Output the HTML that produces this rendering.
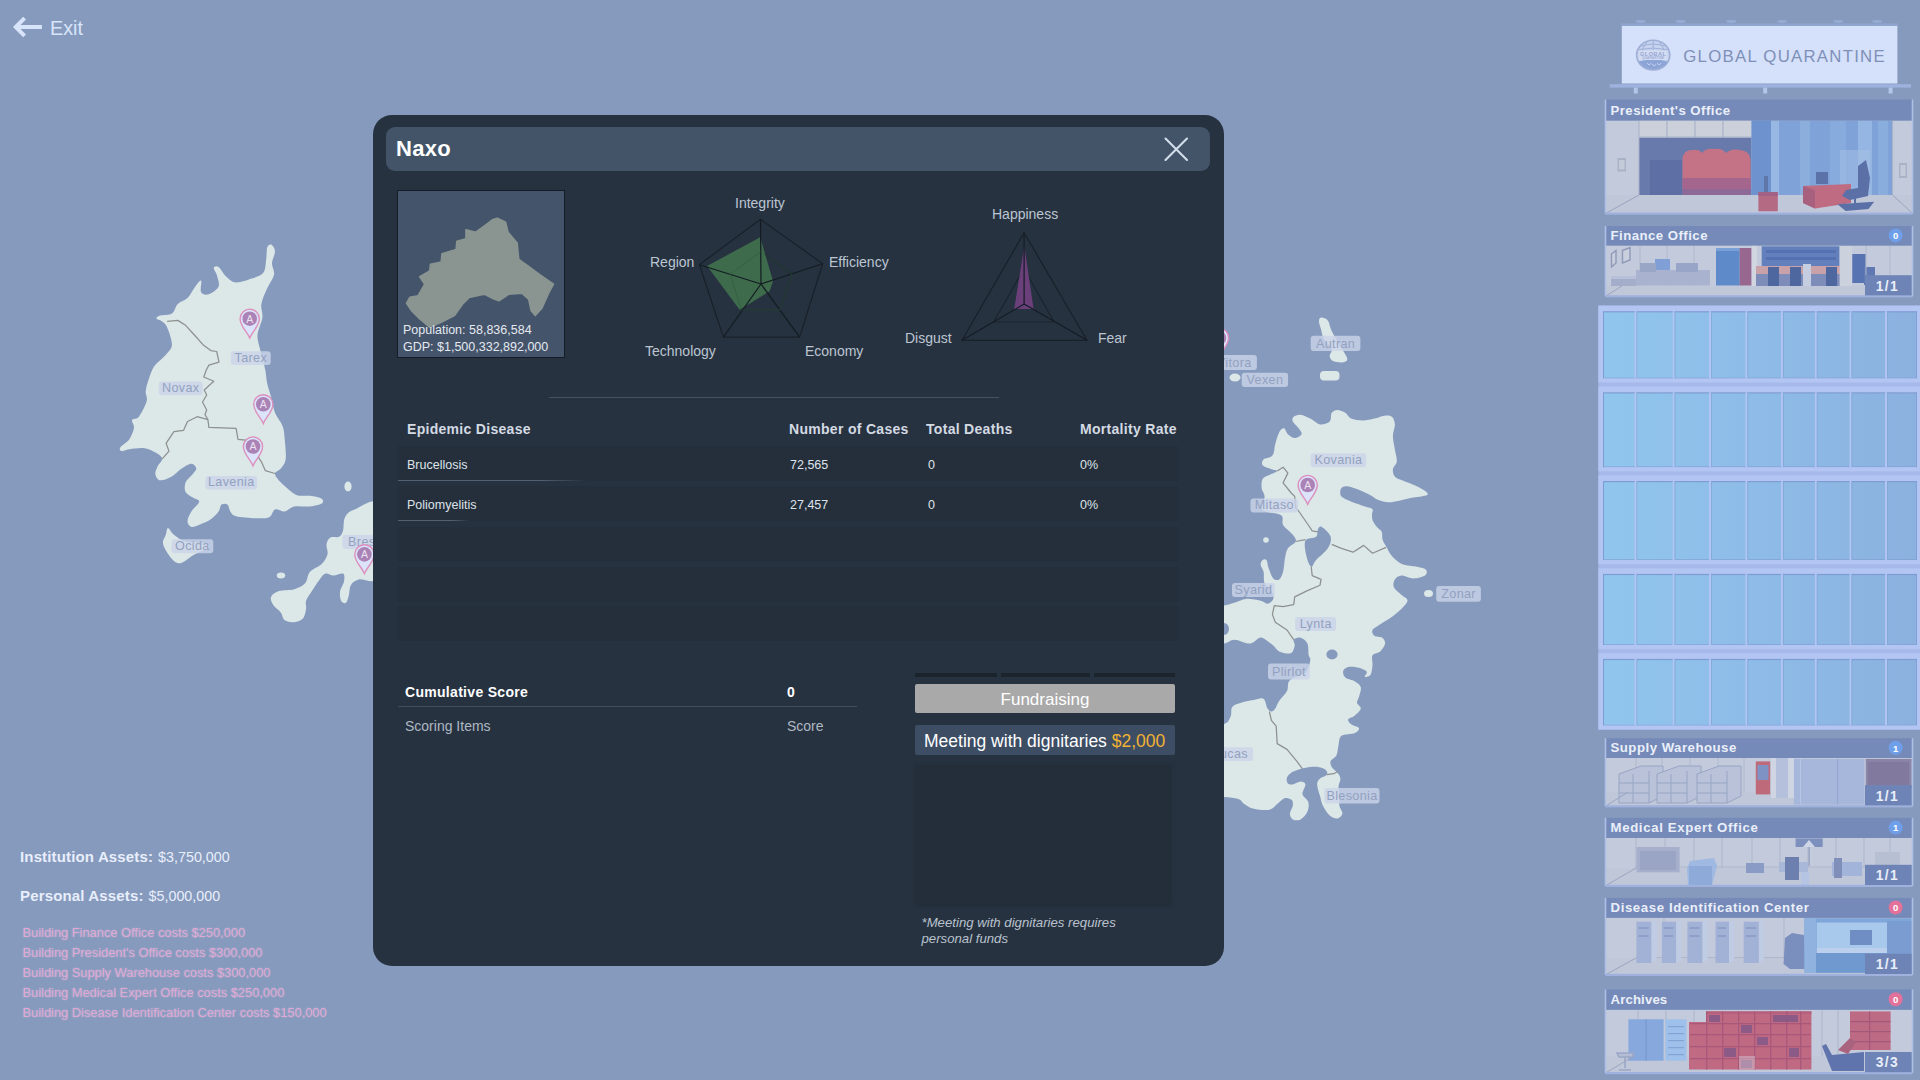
<!DOCTYPE html>
<html lang="en">
<head>
<meta charset="utf-8">
<title>Global Quarantine - Naxo</title>
<style>
*{box-sizing:border-box;margin:0;padding:0}
html,body{width:1920px;height:1080px;overflow:hidden}
body{background:#869abd;font-family:"Liberation Sans",sans-serif;position:relative;color:#fff}
.abs{position:absolute}
#map{position:absolute;left:0;top:0;width:1920px;height:1080px}
/* exit */
#exit{position:absolute;left:50px;top:15.5px;font-size:19.8px;color:#d7e4fa;line-height:24px}
/* assets */
.asset{position:absolute;left:20px;font-size:14.3px;color:#e8eefb;white-space:nowrap;line-height:18px}
.asset b{letter-spacing:.15px;font-weight:bold;font-size:15px;margin-right:1px}
.cost{position:absolute;left:22.5px;font-size:12.85px;color:#dea9d3;text-shadow:0 0 2px rgba(230,200,235,.55);white-space:nowrap;line-height:16px}
/* modal */
#modal{position:absolute;left:373px;top:115px;width:850.5px;height:850.5px;background:#273240;border-radius:19px}
#mhead{position:absolute;left:13px;top:12px;width:824px;height:44px;background:#435468;border-radius:9px}
#mtitle{position:absolute;left:10px;top:9px;font-size:22px;font-weight:bold;color:#fff;line-height:26px;letter-spacing:.3px}
#cbox{position:absolute;left:24px;top:75px;width:168px;height:168px;background:#44546a;border:1.5px solid #151c26}
#cbox .t{position:absolute;left:5px;font-size:12.5px;color:#e4e9f0;line-height:15px;white-space:nowrap}
.rl{position:absolute;font-size:14px;color:#bcc6d2;white-space:nowrap;line-height:16px}
#divider{position:absolute;left:176px;top:282px;width:450px;height:1px;background:#465363}
.th{position:absolute;top:306px;font-size:14px;font-weight:bold;color:#d3dae3;letter-spacing:.3px;white-space:nowrap;line-height:16px}
.row{position:absolute;left:25px;width:780px;height:35px;background:#252f3b}
.row span{position:absolute;top:11.5px;font-size:12.5px;color:#dde3ea;line-height:15px;white-space:nowrap}
.row i{position:absolute;left:0;bottom:0;height:1px;background:linear-gradient(90deg,#53606f 0,#53606f 75%,rgba(83,96,111,0))}
.tab{position:absolute;top:558px;height:4px;background:#1b232d}
#fund{position:absolute;left:542px;top:569px;width:260px;height:29px;background:#a9a9a9;border-radius:2px;color:#fff;font-size:17px;text-align:center;line-height:32px}
#meet{position:absolute;left:542px;top:610px;width:260px;height:30px;background:#3d4d63;border-radius:2px;color:#fff;font-size:17.5px;line-height:32px;padding-left:9px;white-space:nowrap}
#meet em{font-style:normal;color:#f2b233}
#dbox{position:absolute;left:542px;top:650px;width:257px;height:141px;background:#242d3a;box-shadow:0 0 3px #242d3a}
#note{position:absolute;left:548.5px;top:800px;font-size:13.2px;font-style:italic;color:#b9c2ce;line-height:16px;white-space:nowrap}
.sc{position:absolute;white-space:nowrap;line-height:16px}
</style>
</head>
<body>
<!--MAPSTART--><svg id="map" width="1920" height="1080" viewBox="0 0 1920 1080">
<g fill="#dce7e8">
<path d="M271.1 244.6 C272.4 245.2 274.9 248.3 275.0 251.4 C275.1 254.5 272.2 259.1 272.0 263.0 C271.8 266.9 274.8 270.5 274.0 274.7 C273.2 278.9 269.3 283.4 267.2 288.3 C265.1 293.2 262.2 299.0 261.4 303.9 C260.6 308.8 263.0 312.3 262.4 317.5 C261.8 322.7 257.8 329.5 257.5 335.0 C257.2 340.5 259.1 344.8 260.4 350.6 C261.7 356.4 264.2 364.5 265.3 370.0 C266.4 375.5 266.2 379.1 267.2 383.6 C268.2 388.1 269.8 392.3 271.1 397.2 C272.4 402.1 273.1 407.9 275.0 412.8 C276.9 417.7 281.2 422.0 282.8 426.4 C284.4 430.8 284.2 434.0 284.7 439.4 C285.2 444.8 286.3 454.0 285.7 458.9 C285.1 463.8 282.6 466.0 280.8 468.6 C279.0 471.2 274.4 471.5 275.0 474.4 C275.6 477.3 281.1 482.7 284.7 486.1 C288.3 489.5 292.2 493.3 296.4 494.9 C300.6 496.5 305.8 495.2 310.0 495.8 C314.2 496.4 319.8 497.4 321.7 498.7 C323.6 500.0 323.6 502.3 321.7 503.6 C319.8 504.9 314.6 506.0 310.0 506.5 C305.4 507.0 298.6 505.7 294.4 506.5 C290.2 507.3 287.9 510.9 284.7 511.4 C281.5 511.9 277.6 508.4 275.0 509.4 C272.4 510.4 272.4 515.7 269.2 517.2 C266.0 518.7 261.1 518.4 255.6 518.2 C250.1 518.0 240.3 517.3 236.1 516.2 C231.9 515.1 231.8 513.3 230.3 511.4 C228.9 509.5 228.9 505.7 227.4 504.6 C225.9 503.5 223.0 503.5 221.5 504.6 C220.0 505.7 220.4 509.0 218.6 511.4 C216.8 513.8 213.7 517.1 210.8 519.2 C207.9 521.3 204.3 522.7 201.1 524.0 C197.9 525.3 193.7 527.4 191.4 526.9 C189.1 526.4 187.5 523.7 187.5 521.1 C187.5 518.5 189.5 514.6 191.4 511.4 C193.3 508.2 198.9 504.0 199.2 501.7 C199.5 499.4 195.6 499.4 193.3 497.8 C191.0 496.2 186.9 494.5 185.6 491.9 C184.3 489.3 184.5 485.1 185.6 482.2 C186.7 479.3 190.6 476.7 192.4 474.4 C194.2 472.1 196.5 470.4 196.3 468.6 C196.1 466.8 193.8 463.8 191.4 463.8 C189.0 463.8 184.9 466.5 181.7 468.6 C178.4 470.7 175.5 474.4 171.9 476.4 C168.3 478.3 163.1 480.6 160.3 480.3 C157.6 480.0 155.9 476.7 155.4 474.4 C154.9 472.1 156.3 469.3 157.4 466.7 C158.5 464.1 162.4 461.2 162.2 458.9 C162.0 456.6 159.3 454.9 156.4 453.1 C153.5 451.3 149.2 448.9 144.7 448.2 C140.2 447.5 133.1 448.7 129.2 449.2 C125.3 449.7 122.9 451.4 121.4 451.1 C119.9 450.8 119.1 449.1 120.4 447.2 C121.7 445.2 126.9 442.6 129.2 439.4 C131.5 436.2 133.5 431.0 134.0 427.8 C134.5 424.6 131.3 421.9 132.1 420.0 C132.9 418.1 136.5 419.8 138.9 416.7 C141.3 413.6 145.6 405.3 146.7 401.1 C147.8 396.9 145.4 395.0 145.7 391.4 C146.0 387.8 147.1 383.9 148.6 379.7 C150.1 375.5 151.5 370.3 154.4 366.1 C157.3 361.9 163.2 358.0 166.1 354.4 C169.0 350.8 171.7 349.2 171.9 344.7 C172.1 340.2 168.7 331.1 167.1 327.2 C165.5 323.3 164.0 322.8 162.2 321.4 C160.4 319.9 156.7 319.5 156.4 318.5 C156.1 317.5 157.7 316.4 160.3 315.6 C162.9 314.8 169.0 315.6 171.9 313.6 C174.8 311.7 175.2 306.5 177.8 303.9 C180.4 301.3 184.6 301.0 187.5 298.1 C190.4 295.2 193.0 289.3 195.3 286.4 C197.6 283.5 200.1 279.6 201.1 280.6 C202.1 281.6 199.8 289.9 201.1 292.2 C202.4 294.5 206.0 295.2 208.9 294.2 C211.8 293.2 217.3 289.6 218.6 286.4 C219.9 283.1 217.5 277.8 216.7 274.7 C215.9 271.6 213.4 269.2 213.7 267.9 C214.0 266.6 216.5 265.4 218.6 266.9 C220.7 268.4 223.5 274.1 226.4 276.7 C229.3 279.3 231.9 282.2 236.1 282.5 C240.3 282.8 247.2 280.2 251.7 278.6 C256.2 277.0 260.9 276.0 263.3 272.8 C265.7 269.6 265.6 263.4 266.2 259.2 C266.8 255.0 266.4 249.9 267.2 247.5 C268.0 245.1 269.8 243.9 271.1 244.6Z"/>
<path d="M168.0 527.9 C169.3 527.9 171.0 532.4 173.9 534.7 C176.8 537.0 180.6 540.0 185.6 541.5 C190.6 543.0 200.1 542.4 204.0 543.4 C207.9 544.4 210.7 545.6 209.0 547.5 C207.3 549.4 198.7 552.2 194.0 554.8 C189.3 557.4 184.6 562.2 181.0 563.0 C177.4 563.8 175.5 562.6 172.5 559.5 C169.5 556.4 164.3 548.5 163.2 544.4 C162.1 540.3 165.0 537.5 165.8 534.7 C166.6 532.0 166.7 527.9 168.0 527.9Z"/>
<path d="M380.0 505.5 C375.8 494.6 360.5 507.4 354.7 509.4 C348.9 511.3 346.9 513.6 345.0 517.2 C343.1 520.8 344.0 527.5 343.0 530.8 C342.0 534.0 341.3 535.6 339.2 536.7 C337.1 537.8 332.5 536.3 330.4 537.6 C328.3 538.9 327.0 541.6 326.5 544.4 C326.0 547.2 328.3 551.0 327.5 554.2 C326.7 557.5 324.6 561.0 321.7 563.9 C318.8 566.8 312.8 568.5 310.0 571.7 C307.2 574.9 307.7 580.4 305.1 583.3 C302.5 586.2 298.8 587.9 294.4 589.2 C290.0 590.5 282.8 589.8 278.9 591.1 C275.0 592.4 272.1 594.6 271.1 596.9 C270.1 599.2 271.5 602.1 273.1 604.7 C274.7 607.3 278.9 609.9 280.8 612.5 C282.7 615.1 282.4 618.7 284.7 620.3 C287.0 621.9 291.3 622.5 294.4 622.2 C297.5 621.9 301.2 620.6 303.2 618.3 C305.1 616.0 305.6 611.5 306.1 608.6 C306.6 605.7 305.1 603.7 306.1 600.8 C307.1 597.9 309.6 594.7 311.9 591.1 C314.2 587.5 317.4 582.3 319.7 579.4 C322.0 576.5 323.3 574.2 325.6 573.6 C327.9 573.0 330.4 575.6 333.3 575.6 C336.2 575.6 341.3 572.6 343.1 573.6 C344.9 574.6 344.5 578.5 344.0 581.4 C343.5 584.3 340.6 587.9 340.1 591.1 C339.6 594.3 340.1 598.8 341.1 600.8 C342.1 602.8 344.7 603.8 346.0 602.8 C347.3 601.8 348.1 597.9 348.9 595.0 C349.7 592.1 349.2 587.9 350.8 585.3 C352.4 582.7 353.7 581.1 358.6 579.4 C363.5 577.7 376.4 587.3 380.0 575.0 C383.6 562.7 384.2 516.4 380.0 505.5Z"/>
<path d="M1321.0 317.5 C1322.5 317.3 1326.0 318.1 1327.8 320.4 C1329.6 322.7 1329.8 327.1 1331.7 331.1 C1333.6 335.2 1336.8 340.2 1339.4 344.7 C1342.0 349.2 1346.6 355.4 1347.2 358.3 C1347.8 361.2 1345.6 361.7 1343.3 362.2 C1341.0 362.7 1335.9 362.2 1333.6 361.2 C1331.3 360.2 1330.0 358.5 1329.7 356.4 C1329.4 354.3 1332.7 351.5 1331.7 348.6 C1330.7 345.7 1325.7 342.1 1323.9 338.9 C1322.1 335.7 1321.8 332.1 1321.0 329.2 C1320.2 326.3 1319.0 323.3 1319.0 321.4 C1319.0 319.4 1319.5 317.7 1321.0 317.5Z"/>
<path d="M1293.7 416.7 C1295.0 415.6 1297.8 414.4 1300.6 414.7 C1303.4 415.0 1307.1 417.0 1310.3 418.6 C1313.5 420.2 1316.8 423.9 1320.0 424.4 C1323.2 424.9 1327.8 423.4 1329.7 421.5 C1331.7 419.6 1330.4 414.7 1331.7 412.8 C1333.0 410.9 1335.2 409.9 1337.5 409.9 C1339.8 409.9 1343.0 411.4 1345.3 412.8 C1347.6 414.2 1348.2 417.3 1351.1 418.6 C1354.0 419.9 1358.9 420.6 1362.8 420.6 C1366.7 420.6 1370.8 419.4 1374.4 418.6 C1378.0 417.8 1381.3 416.0 1384.2 415.7 C1387.1 415.4 1390.1 415.2 1391.9 416.7 C1393.7 418.1 1394.7 421.2 1394.9 424.4 C1395.1 427.6 1392.9 431.9 1392.9 436.1 C1392.9 440.3 1394.2 445.5 1394.9 449.7 C1395.6 453.9 1397.1 458.1 1396.8 461.4 C1396.5 464.6 1393.2 466.6 1392.9 469.2 C1392.6 471.8 1393.3 474.8 1395.0 476.7 C1396.7 478.6 1399.8 479.3 1403.3 480.8 C1406.8 482.3 1411.9 483.9 1415.8 485.8 C1419.7 487.7 1425.0 490.7 1426.7 492.3 C1428.4 493.9 1428.3 494.6 1425.8 495.5 C1423.3 496.4 1416.1 496.9 1411.7 497.8 C1407.3 498.7 1403.1 500.1 1399.2 500.8 C1395.3 501.6 1391.8 502.4 1388.3 502.3 C1384.8 502.2 1381.3 501.2 1378.3 500.0 C1375.2 498.8 1373.5 496.8 1370.0 495.0 C1366.5 493.2 1361.4 490.6 1357.5 489.2 C1353.6 487.8 1349.4 486.5 1346.7 486.3 C1344.0 486.1 1342.6 487.0 1341.5 488.0 C1340.4 489.0 1340.2 491.0 1340.2 492.5 C1340.2 494.0 1340.3 495.4 1341.8 496.8 C1343.3 498.2 1345.9 499.4 1349.2 500.8 C1352.5 502.2 1358.2 504.2 1361.7 505.4 C1365.2 506.6 1368.2 507.1 1370.0 507.8 C1371.8 508.5 1372.5 508.9 1372.8 509.8 C1373.1 510.8 1372.1 511.8 1372.1 513.5 C1372.0 515.2 1371.7 517.8 1372.5 520.0 C1373.3 522.2 1375.2 524.8 1376.7 526.7 C1378.2 528.7 1380.7 529.6 1381.7 531.7 C1382.7 533.8 1381.8 536.9 1382.5 539.2 C1383.2 541.6 1384.2 543.0 1385.8 545.8 C1387.4 548.6 1389.2 553.1 1391.9 556.1 C1394.6 559.1 1397.5 562.1 1401.7 563.9 C1405.9 565.7 1413.2 565.8 1417.2 566.8 C1421.2 567.8 1424.7 568.2 1426.0 569.7 C1427.3 571.2 1427.1 574.1 1425.0 575.6 C1422.9 577.1 1417.2 578.5 1413.3 578.5 C1409.4 578.5 1404.8 575.5 1401.7 575.6 C1398.6 575.8 1396.2 577.5 1394.9 579.4 C1393.6 581.3 1392.8 584.6 1393.9 587.2 C1395.0 589.8 1399.4 592.7 1401.7 595.0 C1404.0 597.3 1407.8 598.2 1407.5 600.8 C1407.2 603.4 1402.6 607.7 1399.7 610.6 C1396.8 613.5 1393.2 616.0 1390.0 618.3 C1386.8 620.6 1383.2 622.2 1380.3 624.2 C1377.4 626.2 1373.5 628.1 1372.5 630.0 C1371.5 631.9 1372.8 634.5 1374.4 635.8 C1376.0 637.1 1380.4 636.5 1382.2 637.8 C1384.0 639.1 1385.4 641.3 1385.1 643.6 C1384.8 645.9 1382.4 649.5 1380.3 651.4 C1378.2 653.3 1373.8 653.0 1372.5 655.3 C1371.2 657.6 1372.8 661.8 1372.5 665.0 C1372.2 668.2 1371.9 672.8 1370.6 674.7 C1369.3 676.7 1365.3 677.2 1364.7 676.7 C1364.1 676.2 1367.7 673.2 1366.7 671.7 C1365.7 670.2 1361.8 668.6 1358.9 667.8 C1356.0 667.0 1351.8 666.3 1349.2 666.8 C1346.6 667.3 1344.0 668.9 1343.3 670.7 C1342.6 672.5 1343.3 675.7 1345.3 677.5 C1347.2 679.3 1352.4 679.8 1355.0 681.4 C1357.6 683.0 1360.1 684.6 1360.8 687.2 C1361.5 689.8 1359.5 694.4 1358.9 697.0 C1358.3 699.6 1356.7 700.9 1357.0 702.8 C1357.3 704.7 1361.1 706.5 1360.8 708.6 C1360.5 710.7 1357.1 713.6 1355.0 715.4 C1352.9 717.2 1348.9 717.8 1348.2 719.3 C1347.5 720.8 1349.3 722.8 1351.1 724.2 C1352.9 725.7 1358.2 726.5 1358.9 728.0 C1359.6 729.5 1357.9 731.6 1355.0 732.9 C1352.1 734.2 1344.2 733.7 1341.4 735.8 C1338.7 737.9 1339.3 742.4 1338.5 745.6 C1337.7 748.9 1337.8 752.7 1336.5 755.3 C1335.2 757.9 1331.5 759.2 1330.7 761.1 C1329.9 763.0 1330.6 765.0 1331.7 766.9 C1332.8 768.8 1336.0 770.8 1337.5 772.8 C1339.0 774.8 1340.2 776.3 1340.4 778.6 C1340.6 780.9 1338.7 783.5 1338.5 786.4 C1338.3 789.3 1339.2 792.9 1339.4 796.1 C1339.6 799.3 1338.9 802.9 1339.4 805.8 C1339.9 808.7 1342.7 811.5 1342.4 813.6 C1342.1 815.7 1339.6 818.2 1337.5 818.5 C1335.4 818.8 1332.1 817.7 1329.7 815.6 C1327.3 813.5 1324.5 809.0 1322.9 805.8 C1321.3 802.5 1321.0 799.7 1320.0 796.1 C1319.0 792.5 1317.1 787.3 1317.1 784.4 C1317.1 781.5 1318.4 780.2 1320.0 778.6 C1321.6 777.0 1325.8 776.2 1326.8 774.7 C1327.8 773.2 1327.2 771.2 1325.8 769.9 C1324.3 768.6 1321.7 767.2 1318.1 766.9 C1314.5 766.6 1308.6 767.1 1304.4 767.9 C1300.2 768.7 1295.7 770.2 1292.8 771.8 C1289.9 773.4 1287.8 775.6 1287.0 777.6 C1286.2 779.6 1286.9 782.4 1287.9 783.5 C1288.9 784.6 1290.7 784.7 1292.8 784.4 C1294.9 784.1 1298.5 781.5 1300.6 781.5 C1302.7 781.5 1305.1 782.3 1305.4 784.4 C1305.7 786.5 1302.0 791.3 1302.5 794.2 C1303.0 797.1 1307.5 799.0 1308.3 801.9 C1309.1 804.8 1308.7 808.8 1307.4 811.7 C1306.1 814.6 1303.0 818.1 1300.6 819.4 C1298.2 820.7 1294.6 820.4 1292.8 819.4 C1291.0 818.4 1289.9 815.9 1289.9 813.6 C1289.9 811.3 1292.5 808.1 1292.8 805.8 C1293.1 803.5 1293.1 801.3 1291.8 800.0 C1290.5 798.7 1287.4 797.5 1285.0 798.1 C1282.6 798.8 1279.8 802.0 1277.2 803.9 C1274.6 805.8 1273.3 808.9 1269.4 809.7 C1265.5 810.5 1258.1 809.8 1253.9 808.8 C1249.7 807.8 1246.8 805.5 1244.2 803.9 C1241.6 802.3 1241.7 800.1 1238.3 799.0 C1234.9 797.9 1230.1 797.4 1223.7 797.1 C1217.3 796.8 1204.0 828.7 1200.0 797.0 C1196.0 765.3 1197.5 638.4 1200.0 606.7 C1202.5 575.0 1211.0 606.9 1215.0 606.7 C1219.0 606.5 1220.5 606.4 1223.7 605.7 C1226.9 605.1 1230.7 603.9 1234.4 602.8 C1238.1 601.7 1241.7 599.2 1246.1 598.9 C1250.5 598.6 1257.1 600.0 1260.7 600.8 C1264.3 601.6 1265.4 604.0 1267.5 603.7 C1269.6 603.4 1272.6 601.0 1273.3 598.9 C1274.0 596.8 1272.9 593.7 1271.4 591.1 C1270.0 588.5 1265.9 586.5 1264.6 583.3 C1263.3 580.1 1264.2 574.8 1263.6 571.7 C1262.9 568.6 1260.9 566.9 1260.7 564.9 C1260.5 562.9 1261.6 560.8 1262.6 560.0 C1263.6 559.2 1265.5 558.7 1266.5 560.0 C1267.5 561.3 1267.4 564.7 1268.5 567.8 C1269.6 570.9 1271.5 576.6 1273.3 578.5 C1275.1 580.4 1277.6 580.5 1279.2 579.4 C1280.8 578.3 1282.1 575.2 1283.1 571.7 C1284.1 568.2 1284.2 562.0 1285.0 558.1 C1285.8 554.2 1286.1 551.1 1287.9 548.3 C1289.7 545.5 1294.9 543.8 1295.7 541.5 C1296.5 539.2 1294.9 537.5 1292.8 534.7 C1290.7 532.0 1285.0 528.2 1283.1 525.0 C1281.1 521.8 1284.5 517.8 1281.1 515.3 C1277.7 512.8 1265.3 513.1 1262.6 510.0 C1259.8 506.9 1264.8 500.0 1264.6 496.4 C1264.4 492.8 1262.0 491.5 1261.7 488.6 C1261.4 485.7 1261.3 481.2 1262.6 478.9 C1263.9 476.6 1267.0 476.3 1269.4 475.0 C1271.8 473.7 1276.9 472.1 1277.2 471.1 C1277.5 470.1 1273.8 470.2 1271.4 469.2 C1269.0 468.2 1263.9 466.9 1262.6 465.3 C1261.3 463.7 1262.0 461.0 1263.6 459.4 C1265.2 457.8 1270.5 458.2 1272.4 455.6 C1274.4 453.0 1274.2 447.8 1275.3 443.9 C1276.4 440.0 1277.8 434.8 1279.2 432.2 C1280.7 429.6 1282.5 428.0 1284.0 428.3 C1285.5 428.6 1286.1 432.6 1287.9 434.2 C1289.7 435.8 1292.4 438.1 1294.7 438.1 C1297.0 438.1 1300.8 435.8 1301.5 434.2 C1302.2 432.6 1300.0 430.4 1298.6 428.3 C1297.1 426.2 1293.6 423.4 1292.8 421.5 C1292.0 419.6 1292.4 417.8 1293.7 416.7Z"/>
<ellipse cx="348" cy="486.5" rx="3.6" ry="5"/>
<ellipse cx="281" cy="575.5" rx="4.2" ry="3"/>
<rect x="1320" y="371" width="19.5" height="9.5" rx="4"/>
<ellipse cx="1235" cy="377.5" rx="5.5" ry="4"/>
<ellipse cx="1428.5" cy="593.5" rx="4.5" ry="3.6"/>
<circle cx="1266" cy="540" r="2.8"/>
</g>
<g fill="#869abd">
<path d="M1200.0 645.6 C1204.0 631.9 1218.0 644.6 1223.7 643.6 C1229.4 642.6 1230.0 639.7 1234.4 639.7 C1238.8 639.7 1245.8 643.9 1250.0 643.6 C1254.2 643.3 1257.1 638.4 1259.7 637.8 C1262.3 637.1 1263.3 638.4 1265.6 639.7 C1267.9 641.0 1271.0 643.7 1273.3 645.6 C1275.6 647.5 1276.3 650.1 1279.2 651.4 C1282.1 652.7 1288.2 654.3 1290.8 653.3 C1293.4 652.3 1294.2 647.9 1294.7 645.6 C1295.2 643.3 1292.7 641.0 1293.7 639.7 C1294.7 638.4 1298.3 637.1 1300.6 637.8 C1302.9 638.4 1306.1 640.7 1307.4 643.6 C1308.8 646.5 1308.2 652.6 1308.7 655.3 C1309.2 658.0 1310.7 657.3 1310.3 660.0 C1309.9 662.7 1308.7 669.0 1306.4 671.7 C1304.1 674.5 1299.6 674.9 1296.7 676.5 C1293.8 678.1 1290.5 679.0 1288.9 681.4 C1287.3 683.8 1288.6 687.9 1287.0 691.1 C1285.4 694.3 1281.2 697.9 1279.2 700.8 C1277.2 703.7 1276.6 706.8 1275.3 708.6 C1274.0 710.4 1272.7 711.5 1271.4 711.5 C1270.1 711.5 1268.8 710.7 1267.5 708.6 C1266.2 706.5 1265.9 700.4 1263.6 698.9 C1261.3 697.4 1257.1 699.4 1253.9 699.9 C1250.7 700.4 1247.8 700.7 1244.2 701.8 C1240.6 702.9 1234.8 704.3 1232.5 706.7 C1230.2 709.1 1232.1 713.5 1230.6 716.4 C1229.1 719.3 1228.8 722.6 1223.7 724.2 C1218.6 725.8 1204.0 739.1 1200.0 726.0 C1196.0 712.9 1196.0 659.3 1200.0 645.6Z"/>
<path d="M1321.9 526.9 C1324.0 528.2 1329.7 533.1 1330.7 536.7 C1331.7 540.3 1330.2 544.4 1327.8 548.3 C1325.4 552.2 1318.9 556.9 1316.1 560.0 C1313.3 563.1 1312.8 567.4 1311.2 566.8 C1309.6 566.1 1307.4 560.5 1306.4 556.1 C1305.4 551.7 1303.8 543.8 1305.4 540.6 C1307.0 537.4 1314.0 538.7 1316.1 536.7 C1318.2 534.8 1317.1 530.5 1318.1 528.9 C1319.1 527.3 1319.8 525.6 1321.9 526.9Z"/>
<ellipse cx="1332" cy="654.5" rx="5.6" ry="5"/>
<ellipse cx="1224" cy="629" rx="5" ry="6"/>
</g>
<g fill="none" stroke="#8d918f" stroke-width="1.25" stroke-linejoin="round">
<path d="M167.1 321.4 L177.8 320.4 L185.6 325.3 L195.3 336.0 L203.0 344.7 L210.8 350.6 L216.7 351.5 L219.0 362.2 L208.9 365.1 L206.3 370.0 L203.8 377.0 L213.8 381.3 L204.2 390.0 L206.7 395.0 L202.5 402.0 L206.7 410.0 L205.0 414.5 L207.9 419.6 L208.9 427.4 L236.1 428.3 L238.0 439.4 L247.8 440.4 L261.4 461.8 L265.3 470.6 L275.0 473.5"/>
<path d="M207.9 419.6 L197.2 416.7 L187.5 421.5 L183.6 430.3 L173.9 431.7 L166.1 443.3 L169.0 451.1 L162.2 458.9"/>
<path d="M1277.2 471.1 L1283.1 467.2 L1287.9 473.1 L1283.1 482.8 L1290.8 492.5 L1294.7 496.4 L1295.7 508.0 L1298.6 511.0 L1308.3 525.0 L1312.2 530.8 L1318.0 531.8"/>
<path d="M1331.7 544.4 L1341.4 548.3 L1353.0 552.2 L1363.7 545.4 L1372.5 553.2 L1386.1 547.4"/>
<path d="M1295.7 541.5 L1305.4 539.6"/>
<path d="M1311.2 566.8 L1312.2 575.6 L1321.0 579.4 L1320.0 585.3 L1306.4 591.1 L1294.7 596.9 L1293.7 604.7 L1283.1 606.7 L1274.3 605.7 L1272.4 614.4 L1275.3 622.2 L1287.0 630.0 L1293.7 639.7"/>
<path d="M1269.4 711.5 L1271.4 720.3 L1276.2 726.1 L1277.2 743.6 L1287.0 749.4 L1296.7 761.1 L1302.5 768.9"/>
<path d="M1326.8 774.7 L1333.6 773.7 L1337.5 771.8"/>
</g>
<rect x="230.8" y="351.2" width="39.9" height="13.9" rx="3" fill="#cad4e8" opacity=".8"/><text x="250.8" y="361.7" font-size="12.6" text-anchor="middle" fill="#93a1c0" letter-spacing=".35" font-family="Liberation Sans, sans-serif">Tarex</text>
<rect x="158.8" y="381.4" width="43.8" height="13.9" rx="3" fill="#cad4e8" opacity=".8"/><text x="180.7" y="391.9" font-size="12.6" text-anchor="middle" fill="#93a1c0" letter-spacing=".35" font-family="Liberation Sans, sans-serif">Novax</text>
<rect x="205.5" y="476.1" width="51.6" height="13.4" rx="3" fill="#cad4e8" opacity=".8"/><text x="231.3" y="486.1" font-size="12.6" text-anchor="middle" fill="#93a1c0" letter-spacing=".35" font-family="Liberation Sans, sans-serif">Lavenia</text>
<rect x="171.5" y="539.3" width="41.8" height="13.9" rx="3" fill="#cad4e8" opacity=".8"/><text x="192.4" y="549.8" font-size="12.6" text-anchor="middle" fill="#93a1c0" letter-spacing=".35" font-family="Liberation Sans, sans-serif">Ocida</text>
<rect x="342.5" y="534.7" width="49.0" height="14.3" rx="3" fill="#cad4e8" opacity=".8"/><text x="367.0" y="545.6" font-size="12.6" text-anchor="middle" fill="#93a1c0" letter-spacing=".35" font-family="Liberation Sans, sans-serif">Bresia</text>
<rect x="1310.7" y="335.7" width="49.7" height="15.3" rx="3" fill="#cad4e8" opacity=".8"/><text x="1335.6" y="347.6" font-size="12.6" text-anchor="middle" fill="#93a1c0" letter-spacing=".35" font-family="Liberation Sans, sans-serif">Autran</text>
<rect x="1241.7" y="372.7" width="46.4" height="14.3" rx="3" fill="#cad4e8" opacity=".8"/><text x="1264.9" y="383.6" font-size="12.6" text-anchor="middle" fill="#93a1c0" letter-spacing=".35" font-family="Liberation Sans, sans-serif">Vexen</text>
<rect x="1211.5" y="355.1" width="45.4" height="14.9" rx="3" fill="#cad4e8" opacity=".8"/><text x="1234.2" y="366.6" font-size="12.6" text-anchor="middle" fill="#93a1c0" letter-spacing=".35" font-family="Liberation Sans, sans-serif">Vitora</text>
<rect x="1310.7" y="453.3" width="55.5" height="13.9" rx="3" fill="#cad4e8" opacity=".8"/><text x="1338.5" y="463.8" font-size="12.6" text-anchor="middle" fill="#93a1c0" letter-spacing=".35" font-family="Liberation Sans, sans-serif">Kovania</text>
<rect x="1250.5" y="498.4" width="47.7" height="14.0" rx="3" fill="#cad4e8" opacity=".8"/><text x="1274.3" y="509.0" font-size="12.6" text-anchor="middle" fill="#93a1c0" letter-spacing=".35" font-family="Liberation Sans, sans-serif">Mitaso</text>
<rect x="1232.0" y="583.0" width="42.8" height="14.0" rx="3" fill="#cad4e8" opacity=".8"/><text x="1253.4" y="593.6" font-size="12.6" text-anchor="middle" fill="#93a1c0" letter-spacing=".35" font-family="Liberation Sans, sans-serif">Syarid</text>
<rect x="1295.2" y="617.1" width="40.9" height="13.9" rx="3" fill="#cad4e8" opacity=".8"/><text x="1315.7" y="627.6" font-size="12.6" text-anchor="middle" fill="#93a1c0" letter-spacing=".35" font-family="Liberation Sans, sans-serif">Lynta</text>
<rect x="1436.2" y="585.9" width="44.7" height="15.9" rx="3" fill="#cad4e8" opacity=".8"/><text x="1458.6" y="598.4" font-size="12.6" text-anchor="middle" fill="#93a1c0" letter-spacing=".35" font-family="Liberation Sans, sans-serif">Zonar</text>
<rect x="1268.0" y="663.6" width="41.8" height="15.8" rx="3" fill="#cad4e8" opacity=".8"/><text x="1288.9" y="676.0" font-size="12.6" text-anchor="middle" fill="#93a1c0" letter-spacing=".35" font-family="Liberation Sans, sans-serif">Plirlot</text>
<rect x="1207.5" y="747.2" width="45.6" height="13.9" rx="3" fill="#cad4e8" opacity=".8"/><text x="1230.3" y="757.7" font-size="12.6" text-anchor="middle" fill="#93a1c0" letter-spacing=".35" font-family="Liberation Sans, sans-serif">Lucas</text>
<rect x="1324.4" y="788.0" width="55.1" height="15.5" rx="3" fill="#cad4e8" opacity=".8"/><text x="1352.0" y="800.1" font-size="12.6" text-anchor="middle" fill="#93a1c0" letter-spacing=".35" font-family="Liberation Sans, sans-serif">Blesonia</text>
<g transform="translate(249.7 337.9)"><path d="M0 0 C-2.5 -6.5 -9.6 -11.5 -9.6 -19.2 A9.6 9.6 0 1 1 9.6 -19.2 C9.6 -11.5 2.5 -6.5 0 0Z" fill="#dbe4fa" stroke="#dd8fbd" stroke-width="1.4"/><circle cx="0" cy="-19.2" r="7.3" fill="#aa82b6"/><text x="0" y="-15.4" font-size="10.5" text-anchor="middle" fill="#ebe2f2" font-family="Liberation Sans, sans-serif">A</text></g>
<g transform="translate(263.3 423.5)"><path d="M0 0 C-2.5 -6.5 -9.6 -11.5 -9.6 -19.2 A9.6 9.6 0 1 1 9.6 -19.2 C9.6 -11.5 2.5 -6.5 0 0Z" fill="#dbe4fa" stroke="#dd8fbd" stroke-width="1.4"/><circle cx="0" cy="-19.2" r="7.3" fill="#aa82b6"/><text x="0" y="-15.4" font-size="10.5" text-anchor="middle" fill="#ebe2f2" font-family="Liberation Sans, sans-serif">A</text></g>
<g transform="translate(253.0 465.7)"><path d="M0 0 C-2.5 -6.5 -9.6 -11.5 -9.6 -19.2 A9.6 9.6 0 1 1 9.6 -19.2 C9.6 -11.5 2.5 -6.5 0 0Z" fill="#dbe4fa" stroke="#dd8fbd" stroke-width="1.4"/><circle cx="0" cy="-19.2" r="7.3" fill="#aa82b6"/><text x="0" y="-15.4" font-size="10.5" text-anchor="middle" fill="#ebe2f2" font-family="Liberation Sans, sans-serif">A</text></g>
<g transform="translate(364.4 573.6)"><path d="M0 0 C-2.5 -6.5 -9.6 -11.5 -9.6 -19.2 A9.6 9.6 0 1 1 9.6 -19.2 C9.6 -11.5 2.5 -6.5 0 0Z" fill="#dbe4fa" stroke="#dd8fbd" stroke-width="1.4"/><circle cx="0" cy="-19.2" r="7.3" fill="#aa82b6"/><text x="0" y="-15.4" font-size="10.5" text-anchor="middle" fill="#ebe2f2" font-family="Liberation Sans, sans-serif">A</text></g>
<g transform="translate(1307.7 504.2)"><path d="M0 0 C-2.5 -6.5 -9.6 -11.5 -9.6 -19.2 A9.6 9.6 0 1 1 9.6 -19.2 C9.6 -11.5 2.5 -6.5 0 0Z" fill="#dbe4fa" stroke="#dd8fbd" stroke-width="1.4"/><circle cx="0" cy="-19.2" r="7.3" fill="#aa82b6"/><text x="0" y="-15.4" font-size="10.5" text-anchor="middle" fill="#ebe2f2" font-family="Liberation Sans, sans-serif">A</text></g>
<g transform="translate(1219.0 357.0)"><path d="M0 0 C-2.5 -6.5 -9.6 -11.5 -9.6 -19.2 A9.6 9.6 0 1 1 9.6 -19.2 C9.6 -11.5 2.5 -6.5 0 0Z" fill="#dbe4fa" stroke="#dd8fbd" stroke-width="1.4"/><circle cx="0" cy="-19.2" r="7.3" fill="#aa82b6"/><text x="0" y="-15.4" font-size="10.5" text-anchor="middle" fill="#ebe2f2" font-family="Liberation Sans, sans-serif">A</text></g>
</svg><!--MAPEND-->
<div id="exit">Exit</div>
<svg class="abs" style="left:10px;top:14px" width="36" height="28" viewBox="0 0 36 28"><path d="M14.6 4.1 L5.7 13 L14.6 21.9 M6.5 13 H31.9" fill="none" stroke="#d7e4fa" stroke-width="3.9" stroke-linecap="butt" stroke-linejoin="miter"/></svg>

<div class="asset" style="top:847.5px"><b>Institution Assets:</b> $3,750,000</div>
<div class="asset" style="top:886.5px"><b>Personal Assets:</b> $5,000,000</div>
<div class="cost" style="top:925px">Building Finance Office costs $250,000</div>
<div class="cost" style="top:945px">Building President's Office costs $300,000</div>
<div class="cost" style="top:965px">Building Supply Warehouse costs $300,000</div>
<div class="cost" style="top:985px">Building Medical Expert Office costs $250,000</div>
<div class="cost" style="top:1005px">Building Disease Identification Center costs $150,000</div>

<!--PANELSTART--><svg class="abs" style="left:0;top:0" width="1920" height="1080" viewBox="0 0 1920 1080" font-family="Liberation Sans, sans-serif">
<ellipse cx="1640.7" cy="21.5" rx="5" ry="1.4" fill="#97acd4"/>
<ellipse cx="1680.6" cy="21.5" rx="5" ry="1.4" fill="#97acd4"/>
<ellipse cx="1731.2" cy="21.5" rx="5" ry="1.4" fill="#97acd4"/>
<ellipse cx="1781.8" cy="21.5" rx="5" ry="1.4" fill="#97acd4"/>
<ellipse cx="1838.2" cy="21.5" rx="5" ry="1.4" fill="#97acd4"/>
<ellipse cx="1877.1" cy="21.5" rx="5" ry="1.4" fill="#97acd4"/>
<rect x="1621.0" y="23.5" width="277.0" height="2.5" fill="#8fa5cf" />
<rect x="1621.8" y="26.0" width="275.6" height="57.5" fill="#d5e0fa" />
<rect x="1609.6" y="84.2" width="301.4" height="3.4" fill="#9db2df" />
<rect x="1633.8" y="87.6" width="4.0" height="5.9" fill="#b4c5ea" />
<rect x="1763.2" y="87.6" width="4.0" height="5.9" fill="#b4c5ea" />
<rect x="1888.6" y="87.6" width="4.0" height="5.9" fill="#b4c5ea" />
<g transform="translate(1653.2 55.1)"><ellipse rx="16.6" ry="14.8" fill="#c6d2ee" stroke="#9fafd6" stroke-width="1.6"/><path d="M-14.6 6.5 Q0 2.5 14.6 6.5 A16.6 14.8 0 0 1 -14.6 6.5Z" fill="#8da5d6"/><g fill="none" stroke="#9fb0d8" stroke-width="1"><path d="M-12 -9 Q0 -13 12 -9 M-14.5 -5.5 Q0 -8.5 14.5 -5.5 M-6 -13.5 Q-10 -8 -11 -4 M6 -13.5 Q10 -8 11 -4 M0 -14.5 V-5"/></g><rect x="-14.2" y="-4.6" width="28.4" height="9.6" rx="1.5" fill="#d3dcf3"/><text x="0" y="0.4" font-size="5.6" font-weight="bold" fill="#93a5d0" text-anchor="middle" letter-spacing=".5">GLOBAL</text><text x="0" y="4.3" font-size="3.2" font-weight="bold" fill="#9badd6" text-anchor="middle" letter-spacing=".1">QUARANTINE</text><path d="M-6 8 l2 2 l2 -2 M-1 9 l2 2 l2 -2 M4 8 l2 2 l2 -2" stroke="#c9d5f0" stroke-width="1" fill="none"/></g>
<text x="1683.3" y="61.8" font-size="16.8" font-weight="normal" fill="#7e90b7" text-anchor="start" letter-spacing="0"  textLength="201.4" lengthAdjust="spacing">GLOBAL QUARANTINE</text>
<rect x="1605.5" y="120.5" width="307.0" height="93.0" fill="#c3cadb" />
<rect x="1639.0" y="137.4" width="112.6" height="57.6" fill="#6879ac" />
<rect x="1639.0" y="120.5" width="112.6" height="16.9" fill="#cbd0db" />
<rect x="1666.4" y="120.5" width="1.2" height="16.9" fill="#aab3c8" />
<rect x="1694.4" y="120.5" width="1.2" height="16.9" fill="#aab3c8" />
<rect x="1722.4" y="120.5" width="1.2" height="16.9" fill="#aab3c8" />
<rect x="1639.0" y="136.6" width="112.6" height="1.2" fill="#a4aec6" />
<path d="M1682.5 189 V158 Q1684 150 1692 150 Q1699 149 1702 153 Q1706 148 1714 149 Q1722 148 1726 153 Q1731 148 1740 150 Q1750 151 1750.6 160 V189Z" fill="#c47286"/>
<rect x="1682.5" y="178.0" width="68.1" height="17.0" fill="#9b6390" opacity=".75"/>
<rect x="1650.0" y="160.0" width="32.0" height="35.0" fill="#56699f" opacity=".6"/>
<rect x="1751.6" y="120.5" width="141.0" height="74.5" fill="#7fa3d8" />
<rect x="1751.6" y="120.5" width="19.4" height="74.5" fill="#6d92cd" />
<rect x="1771.0" y="120.5" width="8.0" height="74.5" fill="#98b8e4" />
<rect x="1800.0" y="120.5" width="10.0" height="74.5" fill="#8eb0df" opacity=".8"/>
<rect x="1830.0" y="120.5" width="16.0" height="74.5" fill="#8badde" opacity=".8"/>
<rect x="1858.0" y="120.5" width="14.0" height="74.5" fill="#9bbae6" opacity=".8"/>
<rect x="1878.0" y="120.5" width="10.0" height="74.5" fill="#8cafdf" opacity=".8"/>
<rect x="1840.0" y="150.0" width="30.0" height="45.0" fill="#a6c0e6" opacity=".55"/>
<rect x="1605.5" y="195.0" width="307.0" height="18.5" fill="#bfc7d9" />
<path d="M1605.5 213.5 L1639 195 M1912.5 213.5 L1892.6 195" stroke="#9aa5c0" stroke-width="1" fill="none"/>
<path d="M1639 120.5 V195 M1892.6 120.5 V195" stroke="#aab3c8" stroke-width="1" fill="none"/>
<rect x="1617.5" y="158.0" width="8.5" height="13.5" fill="#a9b3c6" />
<rect x="1619.0" y="160.0" width="5.5" height="9.5" fill="#c3cad8" />
<rect x="1899.0" y="163.0" width="8.0" height="15.0" fill="#a9b3c6" />
<rect x="1900.5" y="165.0" width="5.0" height="11.0" fill="#c3cad8" />
<rect x="1758.4" y="192.0" width="19.4" height="19.3" fill="#b56a84" />
<rect x="1758.4" y="192.0" width="19.4" height="4.0" fill="#a26286" />
<rect x="1764.0" y="176.0" width="4.0" height="16.0" fill="#5f76a8" />
<path d="M1803 186 L1851 184 L1851 203 L1815 208.5 L1803 203Z" fill="#bf6c82"/>
<path d="M1803 186 L1815 190 L1815 208.5 L1803 203Z" fill="#a8607f"/>
<rect x="1816.0" y="172.0" width="12.0" height="12.0" fill="#5b72a8" />
<path d="M1858 166 L1866 160 L1870 178 L1868 196 L1850 200 L1842 196 L1846 190 L1858 188Z" fill="#5a70a7"/>
<path d="M1840 205 L1872 203 L1868 208 L1846 210Z M1855 198 V207" fill="#5a70a7" stroke="#5a70a7" stroke-width="2"/>
<rect x="1605.5" y="99.5" width="307.0" height="21.0" fill="#758ab8" />
<rect x="1604.7" y="99.5" width="1.6" height="114.0" fill="#aebfe6" />
<rect x="1911.7" y="99.5" width="1.6" height="114.0" fill="#aebfe6" />
<rect x="1605.5" y="212.5" width="307.0" height="2.2" fill="#9fb1dc" />
<text x="1610.5" y="114.9" font-size="13.2" font-weight="bold" fill="#eaeffa" text-anchor="start" letter-spacing="0"  textLength="119.6" lengthAdjust="spacing">President's Office</text>
<rect x="1605.5" y="245.5" width="307.0" height="50.7" fill="#c3cadb" />
<rect x="1639.5" y="245.5" width="1.0" height="40.5" fill="#b0b9cd" />
<rect x="1666.5" y="245.5" width="1.0" height="40.5" fill="#b0b9cd" />
<rect x="1693.5" y="245.5" width="1.0" height="40.5" fill="#b0b9cd" />
<path d="M1611.5 254 L1616 250.5 V263 L1611.5 267Z M1622.5 250.5 L1630 247.5 V260 L1622.5 263Z" fill="#c9cfdc" stroke="#8f9ab8" stroke-width="1.4"/>
<rect x="1611.0" y="276.0" width="25.0" height="15.0" fill="#a4aecb" />
<rect x="1611.0" y="276.0" width="25.0" height="3.0" fill="#b7c0d8" />
<rect x="1636.0" y="270.0" width="74.0" height="15.5" fill="#a9b2ce" />
<rect x="1655.0" y="259.0" width="15.0" height="11.0" fill="#7f9fd6" />
<rect x="1676.0" y="263.0" width="22.0" height="9.0" fill="#98a5c8" />
<rect x="1640.0" y="263.0" width="16.0" height="9.0" fill="#9aa6c6" />
<rect x="1716.0" y="248.0" width="23.7" height="37.5" fill="#5f8aca" />
<rect x="1716.0" y="248.0" width="23.7" height="3.0" fill="#7aa0d8" />
<rect x="1739.7" y="248.0" width="11.9" height="37.5" fill="#98678f" />
<rect x="1751.6" y="245.5" width="5.4" height="40.5" fill="#d0d5e0" />
<rect x="1761.7" y="246.3" width="77.9" height="19.7" fill="#6380bd" />
<rect x="1766.0" y="250.0" width="70.0" height="3.0" fill="#5472b2" />
<rect x="1766.0" y="257.0" width="70.0" height="3.0" fill="#5472b2" />
<rect x="1756.0" y="266.0" width="93.0" height="8.0" fill="#c9a1a8" />
<rect x="1756.0" y="274.0" width="93.0" height="12.0" fill="#7d8cb8" />
<rect x="1768.0" y="267.0" width="11.0" height="19.0" fill="#4e679f" />
<rect x="1790.0" y="267.0" width="11.0" height="19.0" fill="#4e679f" />
<rect x="1826.0" y="267.0" width="11.0" height="19.0" fill="#4e679f" />
<rect x="1803.0" y="264.0" width="8.0" height="22.0" fill="#c5cde0" />
<rect x="1839.6" y="246.0" width="12.4" height="40.0" fill="#cbd1dd" />
<rect x="1852.3" y="254.0" width="13.5" height="29.0" fill="#5773b2" />
<rect x="1864.0" y="267.0" width="11.0" height="18.0" fill="#6079b3" />
<rect x="1865.5" y="245.5" width="1.0" height="29.5" fill="#b0b9cd" />
<rect x="1889.5" y="245.5" width="1.0" height="29.5" fill="#b0b9cd" />
<rect x="1605.5" y="286.0" width="307.0" height="10.2" fill="#bfc7d9" />
<path d="M1605.5 296.2 L1622 286" stroke="#9aa5c0" stroke-width="1" fill="none"/>
<rect x="1605.5" y="226.0" width="307.0" height="19.5" fill="#758ab8" />
<rect x="1604.7" y="226.0" width="1.6" height="70.2" fill="#aebfe6" />
<rect x="1911.7" y="226.0" width="1.6" height="70.2" fill="#aebfe6" />
<rect x="1605.5" y="295.2" width="307.0" height="2.2" fill="#9fb1dc" />
<text x="1610.5" y="239.9" font-size="13.2" font-weight="bold" fill="#eaeffa" text-anchor="start" letter-spacing="0"  textLength="97" lengthAdjust="spacing">Finance Office</text>
<circle cx="1895.6" cy="235.4" r="7" fill="#6f9fe8"/>
<text x="1895.6" y="239.2" font-size="9.5" font-weight="bold" fill="#fff" text-anchor="middle" letter-spacing="0" >0</text>
<rect x="1865.0" y="275.2" width="46.7" height="20.2" fill="#6e84b6" />
<text x="1887.5" y="290.6" font-size="13.8" font-weight="bold" fill="#e9eefa" text-anchor="middle" letter-spacing="1.4" >1/1</text>
<defs><linearGradient id="gl" x1="0" x2="1" y1="0" y2="0"><stop offset="0" stop-color="#90c6ee"/><stop offset=".45" stop-color="#8ebce8"/><stop offset="1" stop-color="#8bb1df"/></linearGradient></defs>
<rect x="1598.4" y="305.6" width="321.6" height="424.0" fill="#a6b9ea" />
<rect x="1598.4" y="305.6" width="321.6" height="76.9" fill="#b3c6f3" />
<rect x="1603.0" y="311.2" width="314.0" height="67.1" fill="#7f9cd2" />
<rect x="1604.0" y="312.4" width="312.2" height="65.3" fill="url(#gl)" />
<rect x="1634.6" y="311.2" width="1.9" height="67.1" fill="#b3c6f3" />
<rect x="1636.5" y="312.2" width="0.8" height="65.5" fill="#82a6d8" />
<rect x="1672.7" y="311.2" width="1.9" height="67.1" fill="#b3c6f3" />
<rect x="1674.6" y="312.2" width="0.8" height="65.5" fill="#82a6d8" />
<rect x="1709.1" y="311.2" width="1.9" height="67.1" fill="#b3c6f3" />
<rect x="1711.0" y="312.2" width="0.8" height="65.5" fill="#82a6d8" />
<rect x="1745.5" y="311.2" width="1.9" height="67.1" fill="#b3c6f3" />
<rect x="1747.4" y="312.2" width="0.8" height="65.5" fill="#82a6d8" />
<rect x="1781.0" y="311.2" width="1.9" height="67.1" fill="#b3c6f3" />
<rect x="1782.9" y="312.2" width="0.8" height="65.5" fill="#82a6d8" />
<rect x="1814.9" y="311.2" width="1.9" height="67.1" fill="#b3c6f3" />
<rect x="1816.8" y="312.2" width="0.8" height="65.5" fill="#82a6d8" />
<rect x="1849.6" y="311.2" width="1.9" height="67.1" fill="#b3c6f3" />
<rect x="1851.5" y="312.2" width="0.8" height="65.5" fill="#82a6d8" />
<rect x="1885.1" y="311.2" width="1.9" height="67.1" fill="#b3c6f3" />
<rect x="1887.0" y="312.2" width="0.8" height="65.5" fill="#82a6d8" />
<rect x="1598.4" y="386.7" width="321.6" height="84.6" fill="#b3c6f3" />
<rect x="1603.0" y="392.3" width="314.0" height="74.8" fill="#7f9cd2" />
<rect x="1604.0" y="393.5" width="312.2" height="73.0" fill="url(#gl)" />
<rect x="1634.6" y="392.3" width="1.9" height="74.8" fill="#b3c6f3" />
<rect x="1636.5" y="393.3" width="0.8" height="73.2" fill="#82a6d8" />
<rect x="1672.7" y="392.3" width="1.9" height="74.8" fill="#b3c6f3" />
<rect x="1674.6" y="393.3" width="0.8" height="73.2" fill="#82a6d8" />
<rect x="1709.1" y="392.3" width="1.9" height="74.8" fill="#b3c6f3" />
<rect x="1711.0" y="393.3" width="0.8" height="73.2" fill="#82a6d8" />
<rect x="1745.5" y="392.3" width="1.9" height="74.8" fill="#b3c6f3" />
<rect x="1747.4" y="393.3" width="0.8" height="73.2" fill="#82a6d8" />
<rect x="1781.0" y="392.3" width="1.9" height="74.8" fill="#b3c6f3" />
<rect x="1782.9" y="393.3" width="0.8" height="73.2" fill="#82a6d8" />
<rect x="1814.9" y="392.3" width="1.9" height="74.8" fill="#b3c6f3" />
<rect x="1816.8" y="393.3" width="0.8" height="73.2" fill="#82a6d8" />
<rect x="1849.6" y="392.3" width="1.9" height="74.8" fill="#b3c6f3" />
<rect x="1851.5" y="393.3" width="0.8" height="73.2" fill="#82a6d8" />
<rect x="1885.1" y="392.3" width="1.9" height="74.8" fill="#b3c6f3" />
<rect x="1887.0" y="393.3" width="0.8" height="73.2" fill="#82a6d8" />
<rect x="1598.4" y="475.4" width="321.6" height="88.8" fill="#b3c6f3" />
<rect x="1603.0" y="481.0" width="314.0" height="79.0" fill="#7f9cd2" />
<rect x="1604.0" y="482.2" width="312.2" height="77.2" fill="url(#gl)" />
<rect x="1634.6" y="481.0" width="1.9" height="79.0" fill="#b3c6f3" />
<rect x="1636.5" y="482.0" width="0.8" height="77.4" fill="#82a6d8" />
<rect x="1672.7" y="481.0" width="1.9" height="79.0" fill="#b3c6f3" />
<rect x="1674.6" y="482.0" width="0.8" height="77.4" fill="#82a6d8" />
<rect x="1709.1" y="481.0" width="1.9" height="79.0" fill="#b3c6f3" />
<rect x="1711.0" y="482.0" width="0.8" height="77.4" fill="#82a6d8" />
<rect x="1745.5" y="481.0" width="1.9" height="79.0" fill="#b3c6f3" />
<rect x="1747.4" y="482.0" width="0.8" height="77.4" fill="#82a6d8" />
<rect x="1781.0" y="481.0" width="1.9" height="79.0" fill="#b3c6f3" />
<rect x="1782.9" y="482.0" width="0.8" height="77.4" fill="#82a6d8" />
<rect x="1814.9" y="481.0" width="1.9" height="79.0" fill="#b3c6f3" />
<rect x="1816.8" y="482.0" width="0.8" height="77.4" fill="#82a6d8" />
<rect x="1849.6" y="481.0" width="1.9" height="79.0" fill="#b3c6f3" />
<rect x="1851.5" y="482.0" width="0.8" height="77.4" fill="#82a6d8" />
<rect x="1885.1" y="481.0" width="1.9" height="79.0" fill="#b3c6f3" />
<rect x="1887.0" y="482.0" width="0.8" height="77.4" fill="#82a6d8" />
<rect x="1598.4" y="568.3" width="321.6" height="80.9" fill="#b3c6f3" />
<rect x="1603.0" y="573.9" width="314.0" height="71.1" fill="#7f9cd2" />
<rect x="1604.0" y="575.1" width="312.2" height="69.3" fill="url(#gl)" />
<rect x="1634.6" y="573.9" width="1.9" height="71.1" fill="#b3c6f3" />
<rect x="1636.5" y="574.9" width="0.8" height="69.5" fill="#82a6d8" />
<rect x="1672.7" y="573.9" width="1.9" height="71.1" fill="#b3c6f3" />
<rect x="1674.6" y="574.9" width="0.8" height="69.5" fill="#82a6d8" />
<rect x="1709.1" y="573.9" width="1.9" height="71.1" fill="#b3c6f3" />
<rect x="1711.0" y="574.9" width="0.8" height="69.5" fill="#82a6d8" />
<rect x="1745.5" y="573.9" width="1.9" height="71.1" fill="#b3c6f3" />
<rect x="1747.4" y="574.9" width="0.8" height="69.5" fill="#82a6d8" />
<rect x="1781.0" y="573.9" width="1.9" height="71.1" fill="#b3c6f3" />
<rect x="1782.9" y="574.9" width="0.8" height="69.5" fill="#82a6d8" />
<rect x="1814.9" y="573.9" width="1.9" height="71.1" fill="#b3c6f3" />
<rect x="1816.8" y="574.9" width="0.8" height="69.5" fill="#82a6d8" />
<rect x="1849.6" y="573.9" width="1.9" height="71.1" fill="#b3c6f3" />
<rect x="1851.5" y="574.9" width="0.8" height="69.5" fill="#82a6d8" />
<rect x="1885.1" y="573.9" width="1.9" height="71.1" fill="#b3c6f3" />
<rect x="1887.0" y="574.9" width="0.8" height="69.5" fill="#82a6d8" />
<rect x="1598.4" y="653.3" width="321.6" height="76.3" fill="#b3c6f3" />
<rect x="1603.0" y="658.9" width="314.0" height="66.5" fill="#7f9cd2" />
<rect x="1604.0" y="660.1" width="312.2" height="64.7" fill="url(#gl)" />
<rect x="1634.6" y="658.9" width="1.9" height="66.5" fill="#b3c6f3" />
<rect x="1636.5" y="659.9" width="0.8" height="64.9" fill="#82a6d8" />
<rect x="1672.7" y="658.9" width="1.9" height="66.5" fill="#b3c6f3" />
<rect x="1674.6" y="659.9" width="0.8" height="64.9" fill="#82a6d8" />
<rect x="1709.1" y="658.9" width="1.9" height="66.5" fill="#b3c6f3" />
<rect x="1711.0" y="659.9" width="0.8" height="64.9" fill="#82a6d8" />
<rect x="1745.5" y="658.9" width="1.9" height="66.5" fill="#b3c6f3" />
<rect x="1747.4" y="659.9" width="0.8" height="64.9" fill="#82a6d8" />
<rect x="1781.0" y="658.9" width="1.9" height="66.5" fill="#b3c6f3" />
<rect x="1782.9" y="659.9" width="0.8" height="64.9" fill="#82a6d8" />
<rect x="1814.9" y="658.9" width="1.9" height="66.5" fill="#b3c6f3" />
<rect x="1816.8" y="659.9" width="0.8" height="64.9" fill="#82a6d8" />
<rect x="1849.6" y="658.9" width="1.9" height="66.5" fill="#b3c6f3" />
<rect x="1851.5" y="659.9" width="0.8" height="64.9" fill="#82a6d8" />
<rect x="1885.1" y="658.9" width="1.9" height="66.5" fill="#b3c6f3" />
<rect x="1887.0" y="659.9" width="0.8" height="64.9" fill="#82a6d8" />
<rect x="1605.5" y="758.0" width="307.0" height="48.2" fill="#c3cadb" />
<rect x="1635.5" y="758.0" width="1.0" height="34.0" fill="#b0b9cd" />
<rect x="1661.5" y="758.0" width="1.0" height="34.0" fill="#b0b9cd" />
<rect x="1689.5" y="758.0" width="1.0" height="34.0" fill="#b0b9cd" />
<rect x="1717.5" y="758.0" width="1.0" height="34.0" fill="#b0b9cd" />
<rect x="1743.5" y="758.0" width="1.0" height="34.0" fill="#b0b9cd" />
<rect x="1605.5" y="792.0" width="307.0" height="14.2" fill="#bfc7d9" />
<path d="M1619 774 L1641 766 L1663 766 L1663 796 L1649 803 L1619 803Z" fill="#b9c2d8" stroke="#98a4c4" stroke-width="1"/>
<path d="M1619 783 H1649 M1619 793 H1649 M1633 774 V803 M1649 771 V803" stroke="#98a4c4" stroke-width="1" fill="none"/>
<path d="M1657 774 L1679 766 L1701 766 L1701 796 L1687 803 L1657 803Z" fill="#b9c2d8" stroke="#98a4c4" stroke-width="1"/>
<path d="M1657 783 H1687 M1657 793 H1687 M1671 774 V803 M1687 771 V803" stroke="#98a4c4" stroke-width="1" fill="none"/>
<path d="M1697 774 L1719 766 L1741 766 L1741 796 L1727 803 L1697 803Z" fill="#b9c2d8" stroke="#98a4c4" stroke-width="1"/>
<path d="M1697 783 H1727 M1697 793 H1727 M1711 774 V803 M1727 771 V803" stroke="#98a4c4" stroke-width="1" fill="none"/>
<rect x="1755.8" y="761.4" width="14.4" height="33.0" fill="#be6a7a" />
<rect x="1757.5" y="765.0" width="11.0" height="15.0" fill="#7e92c4" />
<rect x="1771.0" y="758.0" width="23.0" height="40.0" fill="#cfd5e2" />
<rect x="1776.0" y="758.0" width="12.0" height="40.0" fill="#b4c0dc" />
<rect x="1793.9" y="758.9" width="70.6" height="45.7" fill="#a7b7dc" />
<rect x="1837.0" y="758.9" width="1.2" height="45.7" fill="#95a6d0" />
<rect x="1800.0" y="758.9" width="1.0" height="45.7" fill="#b7c5e4" />
<rect x="1865.8" y="758.9" width="45.9" height="28.7" fill="#8a84a6" />
<rect x="1868.0" y="762.0" width="41.0" height="23.0" fill="#827a9e" />
<path d="M1605.5 806.2 L1628 792" stroke="#9aa5c0" stroke-width="1" fill="none"/>
<rect x="1605.5" y="738.2" width="307.0" height="19.8" fill="#758ab8" />
<rect x="1604.7" y="738.2" width="1.6" height="68.0" fill="#aebfe6" />
<rect x="1911.7" y="738.2" width="1.6" height="68.0" fill="#aebfe6" />
<rect x="1605.5" y="805.2" width="307.0" height="2.2" fill="#9fb1dc" />
<text x="1610.5" y="752.4" font-size="13.2" font-weight="bold" fill="#eaeffa" text-anchor="start" letter-spacing="0"  textLength="125.8" lengthAdjust="spacing">Supply Warehouse</text>
<circle cx="1895.6" cy="747.8" r="7" fill="#6f9fe8"/>
<text x="1895.6" y="751.5" font-size="9.5" font-weight="bold" fill="#fff" text-anchor="middle" letter-spacing="0" >1</text>
<rect x="1865.0" y="785.2" width="46.7" height="20.2" fill="#6e84b6" />
<text x="1887.5" y="800.6" font-size="13.8" font-weight="bold" fill="#e9eefa" text-anchor="middle" letter-spacing="1.4" >1/1</text>
<rect x="1605.5" y="838.0" width="307.0" height="47.8" fill="#c3cadb" />
<rect x="1635.5" y="838.0" width="1.0" height="30.0" fill="#aeb7cc" />
<rect x="1664.5" y="838.0" width="1.0" height="30.0" fill="#aeb7cc" />
<rect x="1693.5" y="838.0" width="1.0" height="30.0" fill="#aeb7cc" />
<rect x="1721.5" y="838.0" width="1.0" height="30.0" fill="#aeb7cc" />
<rect x="1751.5" y="838.0" width="1.0" height="30.0" fill="#aeb7cc" />
<rect x="1779.5" y="838.0" width="1.0" height="30.0" fill="#aeb7cc" />
<rect x="1807.5" y="838.0" width="1.0" height="30.0" fill="#aeb7cc" />
<rect x="1835.5" y="838.0" width="1.0" height="30.0" fill="#aeb7cc" />
<rect x="1863.5" y="838.0" width="1.0" height="30.0" fill="#aeb7cc" />
<rect x="1889.5" y="838.0" width="1.0" height="30.0" fill="#aeb7cc" />
<rect x="1636.0" y="866.5" width="276.0" height="1.0" fill="#aeb7cc" />
<rect x="1605.5" y="868.0" width="307.0" height="17.8" fill="#bfc7d9" />
<rect x="1636.5" y="847.0" width="43.1" height="25.3" fill="#a6b0cd" />
<rect x="1640.0" y="851.0" width="36.0" height="19.0" fill="#9aa5c6" />
<path d="M1690 861 L1714 858 L1717 866 L1712 885 L1688 885 L1687 868Z" fill="#9fb9e2"/>
<rect x="1689.0" y="866.0" width="23.0" height="19.0" fill="#8eaad8" />
<rect x="1746.0" y="863.0" width="18.0" height="10.0" fill="#8a9cc6" />
<rect x="1779.0" y="862.0" width="29.0" height="10.0" fill="#a9b7d8" />
<rect x="1785.0" y="857.0" width="14.0" height="23.0" fill="#6c7fae" />
<rect x="1801.0" y="872.0" width="8.0" height="13.0" fill="#b5c4e2" />
<rect x="1795.6" y="838.4" width="27.1" height="8.6" fill="#7c8fbd" />
<path d="M1803 847 L1809 840 L1815 847Z" fill="#cfd6e6"/>
<rect x="1808.5" y="847.0" width="1.2" height="19.0" fill="#8f9cbd" />
<rect x="1832.0" y="862.0" width="30.0" height="14.0" fill="#a3b4da" />
<rect x="1834.0" y="858.0" width="8.0" height="20.0" fill="#7f8fba" />
<rect x="1875.0" y="852.0" width="25.0" height="14.0" fill="#b7bfd2" />
<path d="M1605.5 885.8 L1636 868" stroke="#9aa5c0" stroke-width="1" fill="none"/>
<rect x="1605.5" y="817.8" width="307.0" height="20.2" fill="#758ab8" />
<rect x="1604.7" y="817.8" width="1.6" height="68.0" fill="#aebfe6" />
<rect x="1911.7" y="817.8" width="1.6" height="68.0" fill="#aebfe6" />
<rect x="1605.5" y="884.8" width="307.0" height="2.2" fill="#9fb1dc" />
<text x="1610.5" y="832.4" font-size="13.2" font-weight="bold" fill="#eaeffa" text-anchor="start" letter-spacing="0"  textLength="147.3" lengthAdjust="spacing">Medical Expert Office</text>
<circle cx="1895.6" cy="827.6" r="7" fill="#6f9fe8"/>
<text x="1895.6" y="831.3" font-size="9.5" font-weight="bold" fill="#fff" text-anchor="middle" letter-spacing="0" >1</text>
<rect x="1865.0" y="864.8" width="46.7" height="20.2" fill="#6e84b6" />
<text x="1887.5" y="880.2" font-size="13.8" font-weight="bold" fill="#e9eefa" text-anchor="middle" letter-spacing="1.4" >1/1</text>
<rect x="1605.5" y="917.8" width="307.0" height="57.0" fill="#c3cadb" />
<rect x="1663.5" y="917.8" width="1.0" height="40.2" fill="#aeb7cc" />
<rect x="1783.5" y="917.8" width="1.0" height="40.2" fill="#aeb7cc" />
<rect x="1636.0" y="957.0" width="164.0" height="1.0" fill="#aeb7cc" />
<rect x="1605.5" y="958.0" width="307.0" height="16.8" fill="#bfc7d9" />
<rect x="1636.4" y="921.7" width="15.2" height="41.3" fill="#a2b1d6" />
<path d="M1651.6 921.7 L1656.6 920 L1656.6 960 L1651.6 963Z" fill="#c0cbe4"/>
<rect x="1638.4" y="927.0" width="10.2" height="2.0" fill="#8e9fca" />
<rect x="1638.4" y="935.0" width="10.2" height="2.0" fill="#8e9fca" />
<rect x="1661.9" y="921.7" width="14.3" height="41.3" fill="#a2b1d6" />
<path d="M1676.2 921.7 L1681.2 920 L1681.2 960 L1676.2 963Z" fill="#c0cbe4"/>
<rect x="1663.9" y="927.0" width="9.3" height="2.0" fill="#8e9fca" />
<rect x="1663.9" y="935.0" width="9.3" height="2.0" fill="#8e9fca" />
<rect x="1687.4" y="921.7" width="15.2" height="41.3" fill="#a2b1d6" />
<path d="M1702.6 921.7 L1707.6 920 L1707.6 960 L1702.6 963Z" fill="#c0cbe4"/>
<rect x="1689.4" y="927.0" width="10.2" height="2.0" fill="#8e9fca" />
<rect x="1689.4" y="935.0" width="10.2" height="2.0" fill="#8e9fca" />
<rect x="1715.5" y="921.7" width="13.5" height="41.3" fill="#a2b1d6" />
<path d="M1729 921.7 L1734 920 L1734 960 L1729 963Z" fill="#c0cbe4"/>
<rect x="1717.5" y="927.0" width="8.5" height="2.0" fill="#8e9fca" />
<rect x="1717.5" y="935.0" width="8.5" height="2.0" fill="#8e9fca" />
<rect x="1743.7" y="921.7" width="15.2" height="41.3" fill="#a2b1d6" />
<path d="M1758.9 921.7 L1763.9 920 L1763.9 960 L1758.9 963Z" fill="#c0cbe4"/>
<rect x="1745.7" y="927.0" width="10.2" height="2.0" fill="#8e9fca" />
<rect x="1745.7" y="935.0" width="10.2" height="2.0" fill="#8e9fca" />
<path d="M1785 938 L1792 933 L1804 935 L1806 969 L1790 969 L1783.5 964Z" fill="#7b8fbf"/>
<rect x="1804.4" y="918.2" width="107.3" height="54.5" fill="#7fa6d8" />
<rect x="1804.4" y="918.2" width="11.6" height="54.5" fill="#8fb2de" />
<rect x="1816.7" y="922.5" width="70.3" height="25.5" fill="#a8c8ec" />
<rect x="1850.0" y="930.0" width="22.0" height="15.0" fill="#6f8fc4" />
<rect x="1816.7" y="948.0" width="73.3" height="5.0" fill="#bcd0ee" />
<rect x="1816.0" y="953.0" width="95.0" height="19.7" fill="#7099cf" />
<rect x="1887.0" y="921.0" width="24.7" height="34.0" fill="#7a9cd0" />
<path d="M1605.5 974.8 L1636 958" stroke="#9aa5c0" stroke-width="1" fill="none"/>
<rect x="1605.5" y="897.9" width="307.0" height="19.9" fill="#758ab8" />
<rect x="1604.7" y="897.9" width="1.6" height="76.9" fill="#aebfe6" />
<rect x="1911.7" y="897.9" width="1.6" height="76.9" fill="#aebfe6" />
<rect x="1605.5" y="973.8" width="307.0" height="2.2" fill="#9fb1dc" />
<text x="1610.5" y="912.2" font-size="13.2" font-weight="bold" fill="#eaeffa" text-anchor="start" letter-spacing="0"  textLength="198.3" lengthAdjust="spacing">Disease Identification Center</text>
<circle cx="1895.6" cy="907.5" r="7" fill="#e2729c"/>
<text x="1895.6" y="911.2" font-size="9.5" font-weight="bold" fill="#fff" text-anchor="middle" letter-spacing="0" >0</text>
<rect x="1865.0" y="953.8" width="46.7" height="20.2" fill="#6e84b6" />
<text x="1887.5" y="969.2" font-size="13.8" font-weight="bold" fill="#e9eefa" text-anchor="middle" letter-spacing="1.4" >1/1</text>
<rect x="1605.5" y="1009.7" width="307.0" height="63.3" fill="#c3cadb" />
<rect x="1637.5" y="1009.7" width="1.0" height="46.3" fill="#aeb7cc" />
<rect x="1665.5" y="1009.7" width="1.0" height="46.3" fill="#aeb7cc" />
<rect x="1693.5" y="1009.7" width="1.0" height="46.3" fill="#aeb7cc" />
<rect x="1821.5" y="1009.7" width="1.0" height="46.3" fill="#aeb7cc" />
<rect x="1837.5" y="1009.7" width="1.0" height="46.3" fill="#aeb7cc" />
<rect x="1605.5" y="1056.0" width="307.0" height="17.0" fill="#bfc7d9" />
<rect x="1628.4" y="1019.3" width="35.2" height="41.4" fill="#86a8dc" />
<rect x="1645.5" y="1019.3" width="1.2" height="41.4" fill="#7497cf" />
<rect x="1665.4" y="1019.3" width="21.1" height="41.4" fill="#9fc0ea" />
<rect x="1668.0" y="1026.0" width="16.0" height="1.2" fill="#82a5d6" />
<rect x="1668.0" y="1033.0" width="16.0" height="1.2" fill="#82a5d6" />
<rect x="1668.0" y="1040.0" width="16.0" height="1.2" fill="#82a5d6" />
<rect x="1668.0" y="1047.0" width="16.0" height="1.2" fill="#82a5d6" />
<rect x="1668.0" y="1054.0" width="16.0" height="1.2" fill="#82a5d6" />
<rect x="1689.0" y="1022.0" width="17.0" height="47.5" fill="#c06b83" />
<rect x="1706.0" y="1011.4" width="105.4" height="58.1" fill="#bf6a82" />
<rect x="1706.0" y="1011.4" width="105.4" height="2.6" fill="#b5607c" />
<rect x="1690.0" y="1023.0" width="121.0" height="1.3" fill="#a8587a" />
<rect x="1690.0" y="1034.0" width="121.0" height="1.3" fill="#a8587a" />
<rect x="1690.0" y="1046.0" width="121.0" height="1.3" fill="#a8587a" />
<rect x="1690.0" y="1058.0" width="121.0" height="1.3" fill="#a8587a" />
<rect x="1706.0" y="1011.4" width="1.3" height="58.1" fill="#a8587a" />
<rect x="1722.0" y="1011.4" width="1.3" height="58.1" fill="#a8587a" />
<rect x="1738.0" y="1011.4" width="1.3" height="58.1" fill="#a8587a" />
<rect x="1754.0" y="1011.4" width="1.3" height="58.1" fill="#a8587a" />
<rect x="1770.0" y="1011.4" width="1.3" height="58.1" fill="#a8587a" />
<rect x="1786.0" y="1011.4" width="1.3" height="58.1" fill="#a8587a" />
<rect x="1800.0" y="1011.4" width="1.3" height="58.1" fill="#a8587a" />
<rect x="1709.0" y="1015.0" width="11.0" height="7.0" fill="#8b5a86" />
<rect x="1741.0" y="1025.0" width="11.0" height="8.0" fill="#8b5a86" />
<rect x="1757.0" y="1037.0" width="11.0" height="8.0" fill="#8b5a86" />
<rect x="1773.0" y="1015.0" width="25.0" height="7.0" fill="#8b5a86" />
<rect x="1724.0" y="1048.0" width="12.0" height="9.0" fill="#8b5a86" />
<rect x="1789.0" y="1048.0" width="10.0" height="9.0" fill="#8b5a86" />
<rect x="1741.0" y="1060.0" width="11.0" height="8.0" fill="#8b5a86" />
<rect x="1739.0" y="1056.0" width="16.0" height="13.5" fill="#d4c2d2" opacity=".5"/>
<rect x="1850.0" y="1011.4" width="40.6" height="38.6" fill="#bd6a84" />
<rect x="1850.0" y="1021.0" width="40.6" height="1.2" fill="#a3587a" />
<rect x="1850.0" y="1031.0" width="40.6" height="1.2" fill="#a3587a" />
<rect x="1850.0" y="1041.0" width="40.6" height="1.2" fill="#a3587a" />
<rect x="1869.0" y="1011.4" width="1.2" height="38.6" fill="#a3587a" />
<path d="M1822 1046 L1826 1044 L1832 1055 L1864 1052 L1864 1071 L1832 1071Z" fill="#5f74ad"/>
<path d="M1838 1050 L1850 1038 L1856 1042 L1848 1054Z" fill="#a9637f"/>
<path d="M1617 1053 H1634 L1632 1057 H1619Z M1625 1057 V1068 M1619 1070 H1631" fill="#b4bdd4" stroke="#9ba7c6" stroke-width="1.6"/>
<path d="M1605.5 1073 L1634 1056" stroke="#9aa5c0" stroke-width="1" fill="none"/>
<rect x="1605.5" y="989.4" width="307.0" height="20.3" fill="#758ab8" />
<rect x="1604.7" y="989.4" width="1.6" height="83.6" fill="#aebfe6" />
<rect x="1911.7" y="989.4" width="1.6" height="83.6" fill="#aebfe6" />
<rect x="1605.5" y="1072.0" width="307.0" height="2.2" fill="#9fb1dc" />
<text x="1610.5" y="1004.1" font-size="13.2" font-weight="bold" fill="#eaeffa" text-anchor="start" letter-spacing="0"  textLength="56.7" lengthAdjust="spacing">Archives</text>
<circle cx="1895.6" cy="999.2" r="7" fill="#e2729c"/>
<text x="1895.6" y="1002.9" font-size="9.5" font-weight="bold" fill="#fff" text-anchor="middle" letter-spacing="0" >0</text>
<rect x="1865.0" y="1052.0" width="46.7" height="20.2" fill="#6e84b6" />
<text x="1887.5" y="1067.4" font-size="13.8" font-weight="bold" fill="#e9eefa" text-anchor="middle" letter-spacing="1.4" >3/3</text>
</svg><!--PANELEND-->

<div id="modal">
  <div id="mhead"><div id="mtitle">Naxo</div>
    <svg class="abs" style="left:777px;top:9px" width="26" height="26" viewBox="0 0 26 26"><path d="M2.5 2.5 L24 24 M24 2.5 L2.5 24" stroke="#d3deec" stroke-width="2.1" stroke-linecap="round"/></svg>
  </div>
  <div id="cbox">
    <svg class="abs" style="left:0;top:0" width="165" height="165" viewBox="48 35 1000 1000"><path fill="#8a9591" d="M650 200 L700 225 L715 285 L770 350 L780 450 L850 500 L905 540 L990 600 L960 655 L920 745 L880 790 L855 760 L840 690 L800 655 L720 660 L660 700 L630 690 L570 660 L480 680 L440 720 L390 790 L310 830 L240 860 L180 810 L130 760 L100 715 L120 680 L170 670 L210 600 L180 555 L240 520 L245 480 L310 465 L315 415 L400 390 L405 340 L460 325 L460 270 L520 285 L580 240 L620 210 Z" stroke="#8a9591" stroke-width="10" stroke-linejoin="round"/></svg>
    <div class="t" style="top:132px">Population: 58,836,584</div>
    <div class="t" style="top:149px">GDP: $1,500,332,892,000</div>
  </div>
  <svg class="abs" style="left:0;top:0" width="850" height="850" viewBox="373 115 850 850">
  <g fill="none" stroke="#18202a" stroke-width="1.2">
    <polygon points="760.5,219.3 822.7,263.8 799.6,337.1 723.4,337.1 699.4,264.7"/>
    <polygon points="760.5,251.8 791.9,274 780,310 741.4,310 730.2,274"/>
  </g>
  <polygon points="760.2,237.3 773,281 769.6,291.2 739.6,309.7 707.1,265.9" fill="#3d6b4b"/>
  <g stroke="#141c22" stroke-width="1.2" fill="none">
    <path d="M761 284 L760.5 219.3 M761 284 L822.7 263.8 M761 284 L799.6 337.1 M761 284 L723.4 337.1 M761 284 L699.4 264.7"/>
  </g>
  <polygon points="760.5,251.8 791.9,274 780,310 741.4,310 730.2,274" fill="none" stroke="#2f5a3d" stroke-width="1" opacity=".6"/>
  <g fill="none" stroke="#18202a" stroke-width="1.2">
    <polygon points="1024.1,232.7 1087,340.3 962,340.3"/>
    <polygon points="1024,268.7 1054,322 993.6,322" opacity=".8"/>
  </g>
  <polygon points="1024.3,246 1033.6,309 1014.2,309" fill="#6a3f7a"/>
  <path d="M1024.1 304.1 L1024.1 232.7 M1024.1 304.1 L1087 340.3 M1024.1 304.1 L962 340.3" stroke="#151c26" stroke-width="1.2" fill="none"/>
</svg>
  <div class="rl" style="left:362px;top:80px">Integrity</div>
  <div class="rl" style="left:456px;top:139px">Efficiency</div>
  <div class="rl" style="left:432px;top:228px">Economy</div>
  <div class="rl" style="left:272px;top:228px">Technology</div>
  <div class="rl" style="left:277px;top:139px">Region</div>
  <div class="rl" style="left:619px;top:91px">Happiness</div>
  <div class="rl" style="left:532px;top:215px">Disgust</div>
  <div class="rl" style="left:725px;top:215px">Fear</div>
  <div id="divider"></div>

  <div class="th" style="left:34px">Epidemic Disease</div>
  <div class="th" style="left:416px">Number of Cases</div>
  <div class="th" style="left:553px">Total Deaths</div>
  <div class="th" style="left:707px">Mortality Rate</div>

  <div class="row" style="top:331px"><span style="left:9px">Brucellosis</span><span style="left:392px">72,565</span><span style="left:530px">0</span><span style="left:682px">0%</span><i style="width:190px"></i></div>
  <div class="row" style="top:371px"><span style="left:9px">Poliomyelitis</span><span style="left:392px">27,457</span><span style="left:530px">0</span><span style="left:682px">0%</span><i style="width:72px"></i></div>
  <div class="row" style="top:412px"></div>
  <div class="row" style="top:452px"></div>
  <div class="row" style="top:491px"></div>

  <div class="sc" style="left:32px;top:569px;font-size:14px;font-weight:bold;letter-spacing:.3px;color:#fff">Cumulative Score</div>
  <div class="sc" style="left:414px;top:569px;font-size:14px;font-weight:bold;color:#fff">0</div>
  <div class="abs" style="left:25px;top:591px;width:459px;height:1px;background:#414d5c"></div>
  <div class="sc" style="left:32px;top:603px;font-size:14px;color:#aeb8c4">Scoring Items</div>
  <div class="sc" style="left:414px;top:603px;font-size:14px;color:#aeb8c4">Score</div>

  <div class="tab" style="left:542px;width:82px"></div>
  <div class="tab" style="left:628px;width:89px"></div>
  <div class="tab" style="left:721px;width:81px"></div>
  <div id="fund">Fundraising</div>
  <div id="meet">Meeting with dignitaries <em>$2,000</em></div>
  <div id="dbox"></div>
  <div id="note">*Meeting with dignitaries requires<br>personal funds</div>
</div>
</body>
</html>
